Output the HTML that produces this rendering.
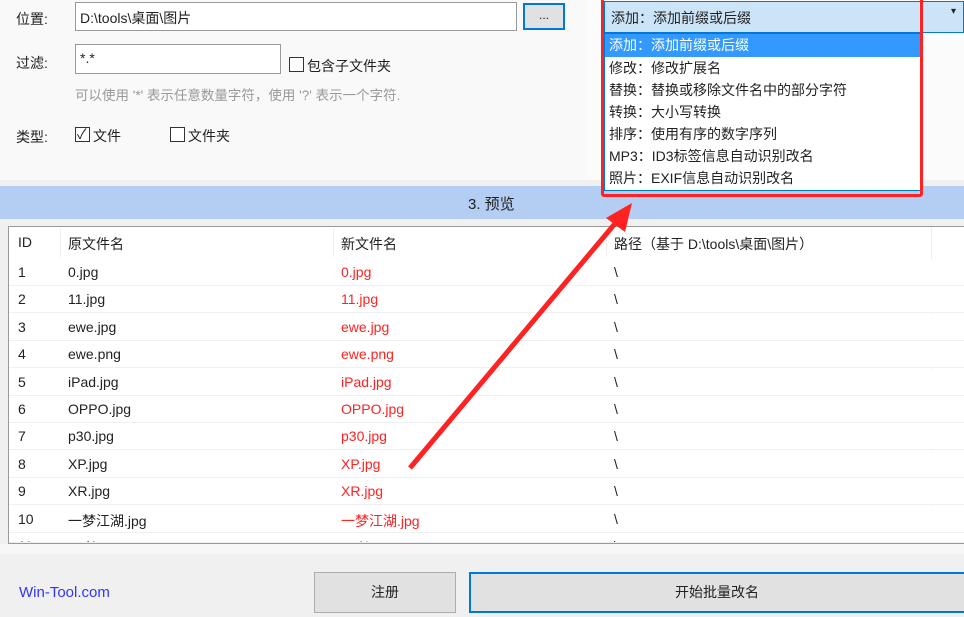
<!DOCTYPE html>
<html><head><meta charset="utf-8"><style>
*{margin:0;padding:0;box-sizing:border-box}
body{width:964px;height:617px;overflow:hidden;background:#f0f0f0;font-family:"Liberation Sans","Noto Sans CJK SC",sans-serif;font-size:14px;color:#222;position:relative}
.a{position:absolute;white-space:nowrap}
.cb{position:absolute;width:15px;height:15px;border:1px solid #333;background:#fff}
.row{position:absolute;left:9px;width:955px;height:27px;border-bottom:1px solid #f0f0f0;background:#fff}
.row span{position:absolute;top:5px}
.red{color:#f22}
.dd div{height:22px;line-height:22px;padding-left:4px}
</style></head><body>
<div class="a" style="left:0;top:0;width:586px;height:180px;background:#f9f9f9"></div>
<div class="a" style="left:586px;top:0;width:378px;height:180px;background:#fbfbfb"></div>
<div class="a" style="left:16px;top:9px">位置:</div>
<div class="a" style="left:75px;top:2px;width:442px;height:29px;background:#fff;border:1px solid #999;padding:5px 4px">D:\tools\桌面\图片</div>
<div class="a" style="left:523px;top:3px;width:42px;height:27px;background:#e1e1e1;border:2px solid #0078d7;text-align:center;font-size:12px;line-height:20px">...</div>
<div class="a" style="left:16px;top:53px">过滤:</div>
<div class="a" style="left:75px;top:44px;width:206px;height:30px;background:#fff;border:1px solid #999;padding:5px 4px">*.*</div>
<div class="cb" style="left:289px;top:57px"></div>
<div class="a" style="left:307px;top:56px">包含子文件夹</div>
<div class="a" style="left:75px;top:84px;color:#999;font-size:13.5px">可以使用 '*' 表示任意数量字符，使用 '?' 表示一个字符.</div>
<div class="a" style="left:16px;top:127px">类型:</div>
<div class="cb" style="left:75px;top:127px"></div>
<div class="a" style="left:77px;top:124px;font-size:14px">✓</div>
<div class="a" style="left:93px;top:126px">文件</div>
<div class="cb" style="left:170px;top:127px"></div>
<div class="a" style="left:188px;top:126px">文件夹</div>
<div class="a" style="left:0;top:186px;width:964px;height:33px;background:#b4cdf2"></div>
<div class="a" style="left:468px;top:193px;font-size:15px">3. 预览</div>
<div class="a" style="left:8px;top:226px;width:960px;height:318px;background:#fff;border:1px solid #999;overflow:hidden">
<div class="a" style="left:0;top:0;width:960px;height:32px;background:#fff"></div>
<div class="a" style="left:9px;top:7px">ID</div><div class="a" style="left:51px;top:2px;width:1px;height:28px;background:#eee"></div>
<div class="a" style="left:59px;top:7px">原文件名</div><div class="a" style="left:324px;top:2px;width:1px;height:28px;background:#eee"></div>
<div class="a" style="left:332px;top:7px">新文件名</div><div class="a" style="left:597px;top:2px;width:1px;height:28px;background:#eee"></div>
<div class="a" style="left:605px;top:7px">路径（基于 D:\tools\桌面\图片）</div><div class="a" style="left:922px;top:0;width:1px;height:318px;background:#eee"></div>
</div>
<div id="rows"></div>
<div class="a" style="left:0;top:544px;width:964px;height:10px;background:#f7f7f7"></div>
<div class="a" style="left:19px;top:584px;color:#3333ff;font-size:15px">Win-Tool.com</div>
<div class="a" style="left:314px;top:572px;width:142px;height:41px;background:#e1e1e1;border:1px solid #adadad;text-align:center;line-height:39px">注册</div>
<div class="a" style="left:469px;top:572px;width:500px;height:41px;background:#e1e1e1;border:2px solid #0078d7;text-align:center;line-height:37px;padding-right:4px">开始批量改名</div>
<div class="a" style="left:604px;top:1px;width:360px;height:32px;background:#cce4f7;border:1px solid #0078d7;padding:6px 6px">添加：添加前缀或后缀<span style="position:absolute;left:346px;top:4px;font-size:10px">▾</span></div>
<div class="a dd" style="left:604px;top:33px;width:317px;height:158px;background:#fff;border:1px solid #0078d7;font-size:14px">
<div style="background:#3399ff;color:#fff;height:23px">添加：添加前缀或后缀</div>
<div>修改：修改扩展名</div><div>替换：替换或移除文件名中的部分字符</div><div>转换：大小写转换</div><div>排序：使用有序的数字序列</div><div>MP3：ID3标签信息自动识别改名</div><div>照片：EXIF信息自动识别改名</div>
</div>
<div class="a" style="left:601px;top:-3px;width:322px;height:200px;border:3px solid #f22;border-radius:3px"></div>
<svg class="a" style="left:0;top:0" width="964" height="617"><line x1="410" y1="468" x2="618" y2="220" stroke="#f22" stroke-width="5"/><polygon points="632,203 606,218 625,232" fill="#f22"/></svg>
<script>
var d=[["1","0.jpg"],["2","11.jpg"],["3","ewe.jpg"],["4","ewe.png"],["5","iPad.jpg"],["6","OPPO.jpg"],["7","p30.jpg"],["8","XP.jpg"],["9","XR.jpg"],["10","一梦江湖.jpg"],["11","王者.jpg"]];
var h="";d.forEach(function(r,i){var t=259+i*27.4;if(t>540)return;var hh=Math.min(27,543-t);h+='<div class="row" style="top:'+t+'px;height:'+hh+'px;overflow:hidden"><span style="left:9px">'+r[0]+'</span><span style="left:59px">'+r[1]+'</span><span class="red" style="left:332px">'+r[1]+'</span><span style="left:605px">\\</span></div>';});
document.getElementById("rows").innerHTML=h;
</script>
</body></html>
